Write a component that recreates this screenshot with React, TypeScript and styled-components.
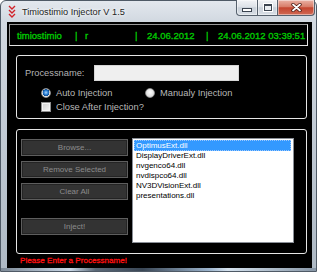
import styled, { createGlobalStyle } from "styled-components";

const GlobalStyle = createGlobalStyle`
  html, body {
    margin: 0;
    padding: 0;
    background: #fff;
  }
  body {
    font-family: "Liberation Sans", Arial, sans-serif;
  }
`;

const dlls = [
  "OptimusExt.dll",
  "DisplayDriverExt.dll",
  "nvgenco64.dll",
  "nvdispco64.dll",
  "NV3DVisionExt.dll",
  "presentations.dll",
];

export default function App() {
  return (
    <>
      <GlobalStyle />
      <Window>
        <TitleBar>
          <AppIcon width="8" height="13" viewBox="0 0 8 13">
            <polyline points="1,1 4,4 7,1" />
            <polyline points="1,5 4,8 7,5" />
            <polyline points="1,9 4,12 7,9" />
          </AppIcon>
          <Title>Timiostimio Injector V 1.5</Title>
          <Caption>
            <CapButton $w={22} $first>
              <MinGlyph />
            </CapButton>
            <CapButton $w={20}>
              <MaxGlyph />
            </CapButton>
            <CapButton $w={37} $close>
              <svg width="11" height="9" viewBox="0 0 11 9">
                <path d="M2 1.5 L9 7.5 M9 1.5 L2 7.5" stroke="#4a1a12" strokeWidth="3.4" strokeLinecap="round" />
                <path d="M2 1.5 L9 7.5 M9 1.5 L2 7.5" stroke="#fff" strokeWidth="1.8" strokeLinecap="round" />
              </svg>
            </CapButton>
          </Caption>
        </TitleBar>
        <Client>
          <StatusPanel>
            <Cell $w={58}>timiostimio</Cell>
            <Cell $w={10}>|</Cell>
            <Cell $w={50}>r</Cell>
            <Cell $w={12}>|</Cell>
            <Cell $w={59}>24.06.2012</Cell>
            <Cell $w={12}>|</Cell>
            <Cell>24.06.2012 03:39:51</Cell>
          </StatusPanel>

          <GroupBox $h={64} $pad="9px 0 0 8px">
            <Row>
              <Label>Processname:</Label>
              <TextInput />
            </Row>
            <OptionRow $top={6}>
              <Option $w={104}>
                <Radio $checked />
                <OptionText>Auto Injection</OptionText>
              </Option>
              <Option>
                <Radio />
                <OptionText>Manualy Injection</OptionText>
              </Option>
            </OptionRow>
            <OptionRow $top={2}>
              <Option>
                <CheckBox />
                <OptionText>Close After Injection?</OptionText>
              </Option>
            </OptionRow>
          </GroupBox>

          <GroupBox $h={125} $pad="9px 0 0 4px" $top={10}>
            <Row>
              <ButtonColumn>
                <FlatButton>Browse...</FlatButton>
                <FlatButton>Remove Selected</FlatButton>
                <FlatButton>Clear All</FlatButton>
                <FlatButton $top={18}>Inject!</FlatButton>
              </ButtonColumn>
              <ListBox>
                {dlls.map((d, i) => (
                  <ListItem key={d} $selected={i === 0}>
                    {d}
                  </ListItem>
                ))}
              </ListBox>
            </Row>
          </GroupBox>

          <ErrorText>Please Enter a Processname!</ErrorText>
        </Client>
      </Window>
    </>
  );
}

const Window = styled.div`
  width: 317px;
  height: 272px;
  box-sizing: border-box;
  border: 1px solid #4f5a66;
  border-radius: 6px 6px 0 0;
  padding: 0 4px 3px 6px;
  display: flex;
  flex-direction: column;
  background:
    linear-gradient(to right, #7d8a97 0, #c9d7e6 22%, #5a6877 30%, #3a4756 45%, #9bb3cc 66%, #d5e2ee 72%, #8796a6 100%) bottom / 100% 3px no-repeat,
    linear-gradient(to bottom, #e3e8ee 0, #d2d9e1 20px, #bfc8d2 55%, #aeb9c4 100%);
`;

const TitleBar = styled.div`
  height: 21px;
  display: flex;
  align-items: center;
`;

const AppIcon = styled.svg`
  margin-left: 1px;
  fill: none;
  stroke: #d2232a;
  stroke-width: 1.4;
`;

const Title = styled.div`
  margin-left: 6px;
  font-size: 9.2px;
  color: #1d1d1d;
  text-shadow: 0 0 5px #fff, 0 0 3px #fff;
`;

const Caption = styled.div`
  display: flex;
  align-self: flex-start;
  margin: -1px -3px 0 auto;
`;

const CapButton = styled.div<{ $w: number; $close?: boolean; $first?: boolean }>`
  width: ${(p) => p.$w}px;
  height: 16px;
  box-sizing: border-box;
  border: 1px solid #56616d;
  border-top: none;
  border-left-width: ${(p) => (p.$first ? 1 : 0)}px;
  border-radius: ${(p) => (p.$first ? "0 0 0 4px" : p.$close ? "0 0 4px 0" : "0")};
  display: flex;
  align-items: center;
  justify-content: center;
  background: ${(p) =>
    p.$close
      ? "linear-gradient(to bottom, #eab2a5 0%, #d87d69 45%, #c4452f 52%, #d06a55 100%)"
      : "linear-gradient(to bottom, #f1f3f6 0%, #dde2e8 45%, #c8d0d9 52%, #d9dfe6 100%)"};
  box-shadow: inset 0 0 0 1px rgba(255, 255, 255, 0.45);
`;

const MinGlyph = styled.div`
  width: 8px;
  height: 2px;
  margin-top: 4px;
  background: #fff;
  border: 1px solid #3b4450;
`;

const MaxGlyph = styled.div`
  width: 6px;
  height: 4px;
  border: 1px solid #3b4450;
  border-top-width: 2px;
  background: #e9edf1;
  box-shadow: 0 0 0 1px #fff;
`;

const Client = styled.div`
  flex: 1;
  background: #000;
  padding: 2px 4px 0 2px;
  display: flex;
  flex-direction: column;
`;

const StatusPanel = styled.div`
  height: 22px;
  box-sizing: border-box;
  border: 1px solid;
  border-color: #9a9a9a #e4e4e4 #e4e4e4 #9a9a9a;
  display: flex;
  align-items: center;
  padding-left: 7px;
`;

const Cell = styled.div<{ $w?: number }>`
  ${(p) => (p.$w ? `width: ${p.$w}px;` : "")}
  flex-shrink: 0;
  font-size: 9.5px;
  color: #00c800;
  -webkit-text-stroke: 0.35px #00c800;
  white-space: nowrap;
`;

const GroupBox = styled.div<{ $h: number; $pad: string; $top?: number }>`
  width: 291px;
  height: ${(p) => p.$h}px;
  box-sizing: border-box;
  margin: ${(p) => p.$top ?? 9}px 0 0 7px;
  border: 1px solid #e6e6e6;
  border-radius: 3px;
  padding: ${(p) => p.$pad};
`;

const Row = styled.div`
  display: flex;
  align-items: flex-start;
`;

const Label = styled.div`
  width: 69px;
  height: 16px;
  line-height: 16px;
  font-size: 9.3px;
  color: #b4b4b4;
`;

const TextInput = styled.div`
  width: 145px;
  height: 16px;
  box-sizing: border-box;
  background: #efefef;
  border: 1px solid #d6d6d6;
`;

const OptionRow = styled.div<{ $top: number }>`
  display: flex;
  align-items: center;
  height: 12px;
  margin-top: ${(p) => p.$top}px;
  padding-left: 16px;
`;

const Option = styled.div<{ $w?: number }>`
  display: flex;
  align-items: center;
  ${(p) => (p.$w ? `width: ${p.$w}px;` : "")}
`;

const Radio = styled.div<{ $checked?: boolean }>`
  width: 10px;
  height: 10px;
  box-sizing: border-box;
  border-radius: 50%;
  border: 1px solid #8d8d8d;
  background: ${(p) =>
    p.$checked
      ? "radial-gradient(circle at 50% 45%, #a9d6ff 0, #2a7fd4 35%, #0e4f98 55%, #e6e6e6 60%, #f4f4f4 100%)"
      : "radial-gradient(circle at 50% 40%, #ffffff 0, #e2e2e2 60%, #cfcfcf 100%)"};
`;

const CheckBox = styled.div`
  width: 10px;
  height: 10px;
  box-sizing: border-box;
  border: 1px solid #8f8f8f;
  background: linear-gradient(135deg, #cfcfcf 0%, #e6e6e6 60%, #f7f7f7 100%);
  box-shadow: inset 0 0 0 1px #f4f4f4;
`;

const OptionText = styled.div`
  margin-left: 5px;
  font-size: 9.3px;
  color: #b8b8b8;
  white-space: nowrap;
`;

const ButtonColumn = styled.div`
  width: 107px;
  display: flex;
  flex-direction: column;
  gap: 5px;
`;

const FlatButton = styled.div<{ $top?: number }>`
  height: 17px;
  box-sizing: border-box;
  margin-top: ${(p) => (p.$top ? p.$top - 5 : 0)}px;
  background: #333;
  border: 1px solid #5e5e5e;
  box-shadow: inset 0 0 0 1px #242424;
  color: #8c8c8c;
  font-size: 8px;
  display: flex;
  align-items: center;
  justify-content: center;
`;

const ListBox = styled.div`
  width: 162px;
  height: 105px;
  box-sizing: border-box;
  margin: -1px 0 0 4px;
  background: #fff;
  border: 1px solid #8a8f97;
  padding: 1px 2px 0 1px;
`;

const ListItem = styled.div<{ $selected?: boolean }>`
  height: 10px;
  line-height: 10px;
  padding-left: 2px;
  font-size: 8px;
  white-space: nowrap;
  color: ${(p) => (p.$selected ? "#fff" : "#000")};
  background: ${(p) => (p.$selected ? "#3399ff" : "transparent")};
  ${(p) => (p.$selected ? "height: 11px; line-height: 11px; outline: 1px dotted #9cc8ff; outline-offset: -1px;" : "")}
`;

const ErrorText = styled.div`
  margin: 2px 0 0 11px;
  font-size: 8.1px;
  color: #ff1010;
  -webkit-text-stroke: 0.3px #ff1010;
  white-space: nowrap;
`;
